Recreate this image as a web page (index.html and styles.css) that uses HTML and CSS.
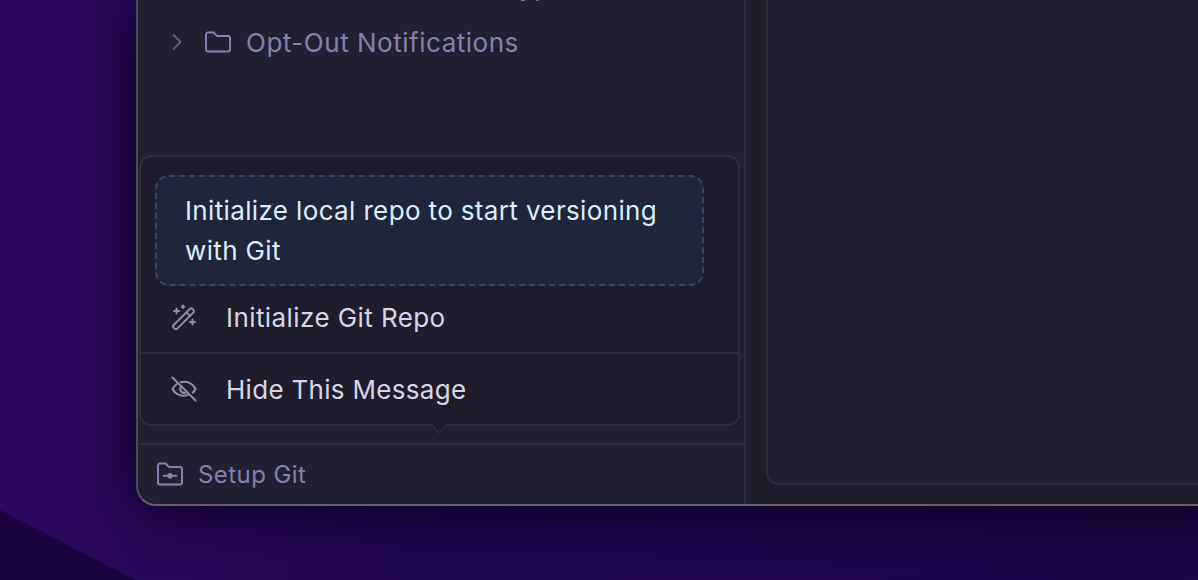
FILE: index.html
```html
<!DOCTYPE html>
<html lang="en">
<head>
  <meta charset="UTF-8" />
  <meta name="viewport" content="width=device-width, initial-scale=1.0"/>
  <title>Setup Git</title>
  <link rel="stylesheet" href="styles.css">
</head>
<body>
  <div class="window">

    <!-- Sidebar -->
    <aside class="sidebar">
      <div class="tree">
        <div class="tree-row tree-row-cut">
          <span class="tree-label">Transactional Email Types</span>
        </div>
        <div class="tree-row">
          <svg class="chevron" viewBox="0 0 12 20" fill="none" stroke="currentColor" stroke-width="1.8" stroke-linecap="round" stroke-linejoin="round"><path d="M2.500 3l7 7-7 7"/></svg>
          <svg class="folder" viewBox="0 0 26 22" fill="none" stroke="currentColor" stroke-width="2" stroke-linejoin="round"><path d="M1 3.500a2 2 0 0 1 2-2h5.600l3.200 3.400H23a2 2 0 0 1 2 2V18.500a2 2 0 0 1-2 2H3a2 2 0 0 1-2-2z"/></svg>
          <span class="tree-label">Opt-Out Notifications</span>
        </div>
      </div>

      <div class="popover">
        <div class="notice">Initialize local repo to start versioning with Git</div>
        <div class="menu-item menu-item-first">
          <svg class="menu-icon" viewBox="0 0 26 26" fill="none" stroke="currentColor" stroke-width="2" stroke-linecap="round" stroke-linejoin="round">
            <path d="M2.400 21.300L18.700 5a2 2 0 0 1 2.800 0l.8.8a2 2 0 0 1 0 2.800L6 24.900a1.500 1.500 0 0 1-2.100 0l-1.500-1.500a1.500 1.500 0 0 1 0-2.100z"/>
            <path d="M15.500 8.500l3.500 3.500"/>
            <path d="M5.500 4.500v5M3 7h5"/>
            <path d="M12 1.500v2.500M10.800 2.800h2.400"/>
            <path d="M21.500 15.500v5M19 18h5"/>
          </svg>
          <span>Initialize Git Repo</span>
        </div>
        <div class="menu-item menu-item-last">
          <svg class="menu-icon" viewBox="0 0 26 26" fill="none" stroke="currentColor" stroke-width="2" stroke-linecap="round" stroke-linejoin="round">
            <path d="M1.500 1.500l23 23"/>
            <path d="M9.800 6.300A12 12 0 0 1 24.500 13a13 13 0 0 1-2.800 3.700"/>
            <path d="M5.700 8.200A13 13 0 0 0 1.500 13a12.500 12.500 0 0 0 15.400 5.900"/>
            <path d="M9.700 11a4 4 0 0 0 4.800 5.700"/>
          </svg>
          <span>Hide This Message</span>
        </div>
        <span class="popover-arrow"></span>
      </div>

      <div class="sidebar-footer">
        <svg class="footer-icon" viewBox="0 0 26 24" fill="none" stroke="currentColor" stroke-width="2" stroke-linecap="round" stroke-linejoin="round">
          <path d="M1 3.500a2 2 0 0 1 2-2h5.600l3.200 3.400H23a2 2 0 0 1 2 2V20.500a2 2 0 0 1-2 2H3a2 2 0 0 1-2-2z"/>
          <path d="M6.500 13.700h3.500M16 13.700h3.500"/>
          <circle cx="13" cy="13.700" r="1.800" fill="currentColor"/>
        </svg>
        <span>Setup Git</span>
      </div>
    </aside>

    <!-- Main -->
    <main class="content">
      <div class="panel"></div>
    </main>

  </div>
</body>
</html>
```

FILE: styles.css
```css
html, body {
  height: 100%;
}

body {
  margin: 0;
  overflow: hidden;
  font-family: Inter, "Noto Sans", sans-serif;
  background: linear-gradient(90deg, #2a0762 0%, #26065a 12%, #1e0550 35%, #1d0549 100%);
}

/* Dark wedge of the wallpaper, bottom left */
body::before {
  content: "";
  position: absolute;
  left: 0;
  bottom: 0;
  width: 135px;
  height: 70px;
  background-color: #180340;
  clip-path: polygon(0 0, 100% 100%, 0 100%);
}

.window {
  position: relative;
  display: flex;
  box-sizing: border-box;
  width: 1100px;
  height: 506px;
  margin-left: 136px;
  background-color: #212030;
  border-left: 2px solid #4c4b57;
  border-bottom: 2px solid #62626a;
  border-bottom-left-radius: 20px;
  box-shadow: 0 2px 60px rgba(0,0,0,0.75);
}

/* Sidebar */
.sidebar {
  display: flex;
  flex-direction: column;
  box-sizing: border-box;
  width: 608px;
  flex-shrink: 0;
  border-right: 2px solid #2d2b40;
}

.tree {
  height: 155px;
  flex-shrink: 0;
  overflow: hidden;
  color: #8581ab;
}

.tree-row {
  display: flex;
  align-items: center;
  height: 40px;
  margin-top: 16px;
  padding-left: 33px;
  font-size: 26px;
  letter-spacing: 0.52px;
}

.tree-row-cut {
  margin-top: -34px;
  padding-left: 95px;
}

.chevron {
  width: 12px;
  height: 20px;
  color: #625e82;
  flex-shrink: 0;
}

.folder {
  width: 26px;
  height: 22px;
  margin-left: 22px;
  flex-shrink: 0;
}

.tree-label {
  margin-left: 15px;
  white-space: nowrap;
}

/* Popover */
.popover {
  position: relative;
  box-sizing: border-box;
  width: 601px;
  height: 271px;
  margin-left: 1px;
  flex-shrink: 0;
  background-color: #1f1d2b;
  border: 2px solid #2f2d44;
  border-radius: 12px;
  color: #d8d6e6;
  font-size: 26px;
}

.notice {
  box-sizing: border-box;
  width: 549px;
  height: 111px;
  margin: 18px 0 0 14px;
  padding: 14px 28px;
  background-color: #20263a;
  border: 2px dashed #34496a;
  border-radius: 14px;
  color: #d9eefc;
  line-height: 40px;
  letter-spacing: 0.36px;
}

.menu-item {
  display: flex;
  align-items: center;
  padding-left: 30px;
}

.menu-item-first {
  height: 62px;
  padding-bottom: 4px;
  border-bottom: 2px solid #2f2d44;
  letter-spacing: 0.42px;
}

.menu-item-last {
  height: 70px;
  letter-spacing: 0.3px;
}

.menu-icon {
  width: 26px;
  height: 26px;
  margin-right: 29px;
  color: #8f8da1;
  flex-shrink: 0;
}

.popover-arrow {
  position: absolute;
  left: 291px;
  bottom: -10px;
  width: 13px;
  height: 13px;
  background-color: #1f1d2b;
  border-right: 2px solid #2f2d44;
  border-bottom: 2px solid #2f2d44;
  transform: rotate(45deg) scale(.72);
}

/* Footer */
.sidebar-footer {
  display: flex;
  align-items: center;
  box-sizing: border-box;
  height: 60px;
  margin-top: 17px;
  padding-left: 19px;
  border-top: 2px solid #2d2b40;
  color: #8581ab;
  font-size: 24px;
  letter-spacing: 0.44px;
}

.footer-icon {
  width: 26px;
  height: 24px;
  margin-right: 15px;
  flex-shrink: 0;
}

/* Main */
.content {
  flex: 1;
  box-sizing: border-box;
  padding: 0 0 19px 20px;
  background-color: #1f1d2a;
}

.panel {
  box-sizing: border-box;
  height: 100%;
  background-color: #212030;
  border-left: 2px solid #2d2b40;
  border-bottom: 2px solid #2d2b40;
  border-bottom-left-radius: 12px;
}
```
